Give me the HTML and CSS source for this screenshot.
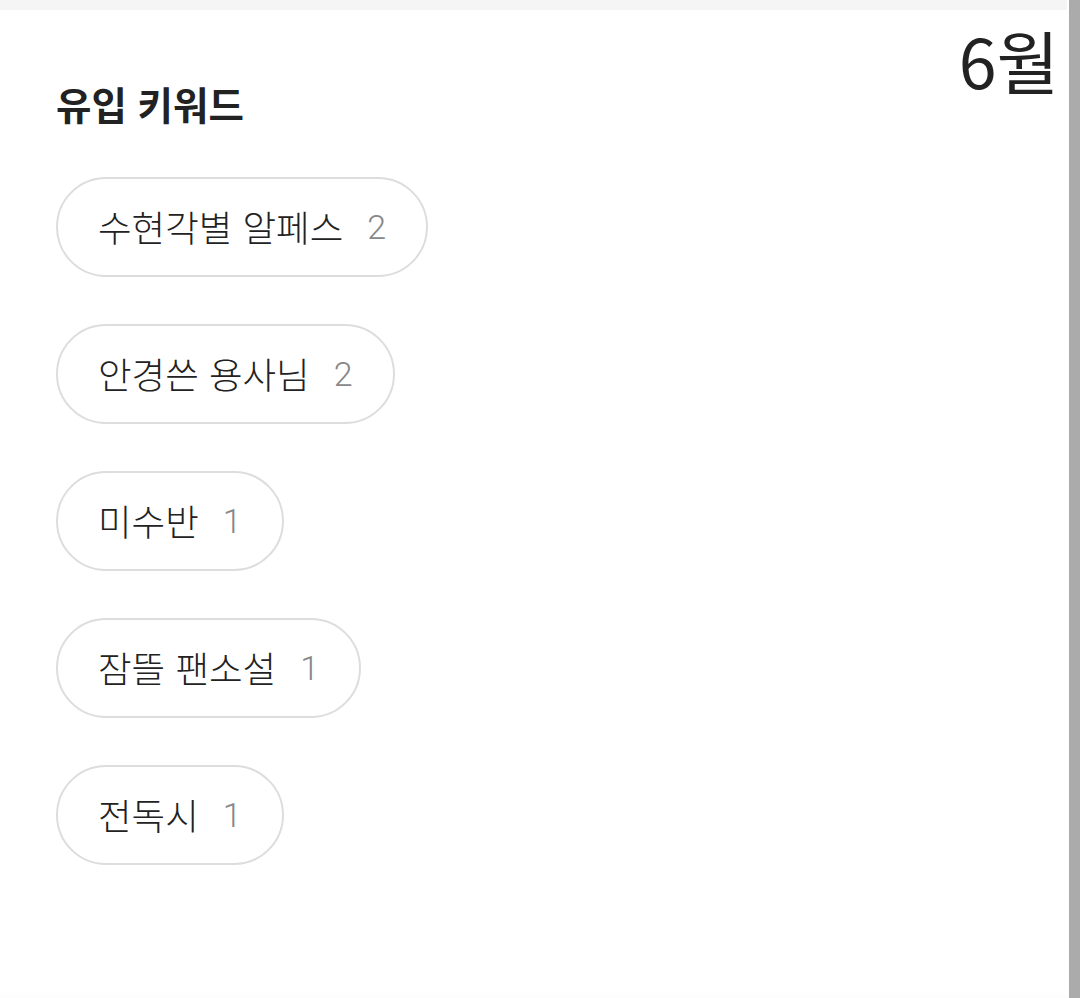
FILE: index.html
```html
<!DOCTYPE html>
<html lang="ko">

<head>
    <meta charset="UTF-8">
    <meta name="viewport" content="width=device-width, initial-scale=1.0">
    <title>유입 키워드</title>
    <link rel="stylesheet" href="styles.css">
</head>

<body>
    <div class="wrap">
        <div class="main">
            <div class="topbar"></div>
            <div class="head">
                <h2 class="tit">유입 키워드</h2>
                <span class="month">6월</span>
            </div>
            <ul class="keys">
                <li><i>수현각별 알페스</i><em>2</em></li>
                <li><i>안경쓴 용사님</i><em>2</em></li>
                <li><i>미수반</i><em>1</em></li>
                <li><i>잠뜰 팬소설</i><em>1</em></li>
                <li><i>전독시</i><em>1</em></li>
            </ul>
        </div>
        <div class="bar"></div>
    </div>
</body>

</html>
```
FILE: styles.css
```css
* {
    margin: 0;
    padding: 0;
    box-sizing: border-box;
}

html,
body {
    height: 100%;
    overflow: hidden;
}

body {
    font-family: "Noto Sans CJK KR", "Noto Sans", sans-serif;
    color: #222;
    background: #fff;
}

em,
i {
    font-style: normal;
}

li {
    list-style: none;
}

.wrap {
    display: flex;
    height: 100%;
}

.main {
    flex: 1;
    display: flex;
    flex-direction: column;
    padding-right: 2px;
    box-shadow: inset 0 -10px 10px -8px rgba(0, 0, 0, 0.02);
}

.topbar {
    height: 10px;
    background-color: #f5f5f5;
}

.head {
    display: flex;
    justify-content: space-between;
    align-items: flex-start;
    padding: 0 8px 0 56px;
}

.tit {
    font-size: 38.5px;
    font-weight: 700;
    line-height: 48px;
    margin-top: 69px;
    color: #222;
}

.month {
    font-size: 68px;
    font-weight: 400;
    line-height: 80px;
    margin-top: 10px;
    color: #222;
}

.keys {
    display: flex;
    flex-direction: column;
    align-items: flex-start;
    gap: 47px;
    padding-left: 56px;
    margin-top: 50px;
}

.keys li {
    display: flex;
    align-items: center;
    height: 100px;
    padding: 0 40px;
    border: 2px solid #ddd;
    border-radius: 50px;
    font-size: 36.5px;
    font-weight: 300;
    line-height: 1;
}

.keys li i {
    color: #222;
}

.keys li em {
    margin-left: 24px;
    color: #888;
    font-family: Roboto, "Noto Sans", sans-serif;
    font-weight: 300;
    font-size: 34px;
}

.bar {
    width: 11px;
    background-color: #ababab;
}
```
